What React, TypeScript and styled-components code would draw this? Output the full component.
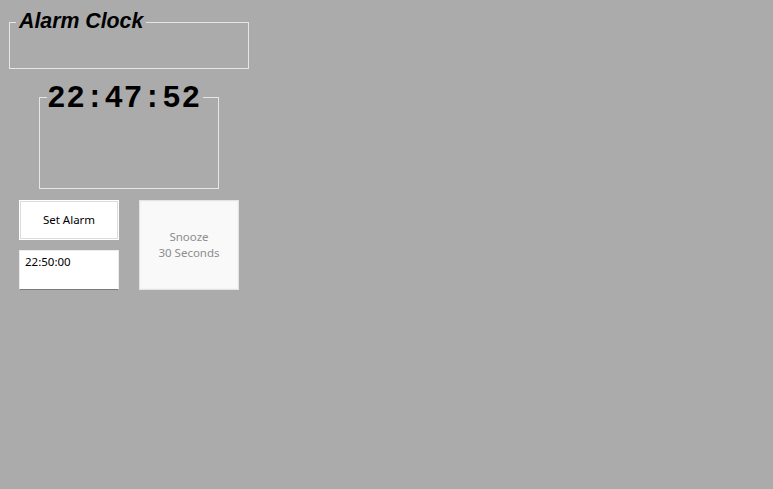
import styled, { createGlobalStyle } from "styled-components";

const GlobalStyle = createGlobalStyle`
  html, body {
    margin: 0;
    padding: 0;
    background: #ababab;
  }
  body {
    width: 773px;
    height: 489px;
    overflow: hidden;
    font-family: "Noto Sans", "Liberation Sans", sans-serif;
  }
`;

const Form = styled.div`
  display: flex;
  flex-direction: column;
  align-items: flex-start;
  padding-top: 22px;
`;

const GroupBox = styled.div<{ $left: number; $width: number; $height: number; $top: number }>`
  position: relative;
  box-sizing: border-box;
  margin-left: ${(p) => p.$left}px;
  margin-top: ${(p) => p.$top}px;
  width: ${(p) => p.$width}px;
  height: ${(p) => p.$height}px;
  border: 1px solid #e6e6e6;
`;

const GroupTitle = styled.div`
  position: absolute;
  left: 6px;
  top: -12px;
  padding: 0 3px 0 3px;
  background: #ababab;
  color: #000;
  font-family: "Liberation Sans", Arial, sans-serif;
  font-weight: bold;
  font-style: italic;
  font-size: 21.3px;
  line-height: 21px;
`;

const ClockTitle = styled.div`
  position: absolute;
  left: 7px;
  top: -15px;
  padding-right: 2px;
  background: #ababab;
  color: #000;
  font-family: "Liberation Mono", "Courier New", monospace;
  font-weight: bold;
  font-size: 31px;
  line-height: 31px;
  letter-spacing: 0.6px;
`;

const Controls = styled.div`
  display: grid;
  grid-template-columns: 100px 100px;
  grid-template-rows: 40px 40px;
  column-gap: 20px;
  row-gap: 10px;
  margin-left: 19px;
  margin-top: 11px;
`;

const Button = styled.button<{ $disabled?: boolean }>`
  box-sizing: border-box;
  margin: 0;
  padding: 0;
  width: 100%;
  height: 100%;
  border: 1px solid ${(p) => (p.$disabled ? "#e4e4e4" : "#ffffff")};
  background: ${(p) => (p.$disabled ? "#f9f9f9" : "#ffffff")};
  box-shadow: inset 0 0 0 1px ${(p) => (p.$disabled ? "#f4f4f4" : "#dcdcdc")};
  border-radius: 0;
  color: ${(p) => (p.$disabled ? "#8d8d8d" : "#000")};
  font-family: "Noto Sans", "Liberation Sans", sans-serif;
  font-size: 11.5px;
  line-height: 16px;
  text-align: center;
`;

const SnoozeButton = styled(Button)`
  grid-row: 1 / span 2;
  grid-column: 2;
`;

const TimeBox = styled.div`
  box-sizing: border-box;
  background: #fff;
  border: 1px solid #ececec;
  border-bottom: 1px solid #7a7a7a;
  padding: 3px 5px;
  color: #000;
  font-family: "Noto Sans", "Liberation Sans", sans-serif;
  font-size: 11.5px;
  line-height: 16px;
`;

export default function App() {
  return (
    <>
      <GlobalStyle />
      <Form>
        <GroupBox $left={9} $top={0} $width={240} $height={47}>
          <GroupTitle>Alarm Clock</GroupTitle>
        </GroupBox>
        <GroupBox $left={39} $top={28} $width={180} $height={92}>
          <ClockTitle>22:47:52</ClockTitle>
        </GroupBox>
        <Controls>
          <Button>Set Alarm</Button>
          <SnoozeButton $disabled disabled>
            Snooze
            <br />
            30 Seconds
          </SnoozeButton>
          <TimeBox>22:50:00</TimeBox>
        </Controls>
      </Form>
    </>
  );
}
